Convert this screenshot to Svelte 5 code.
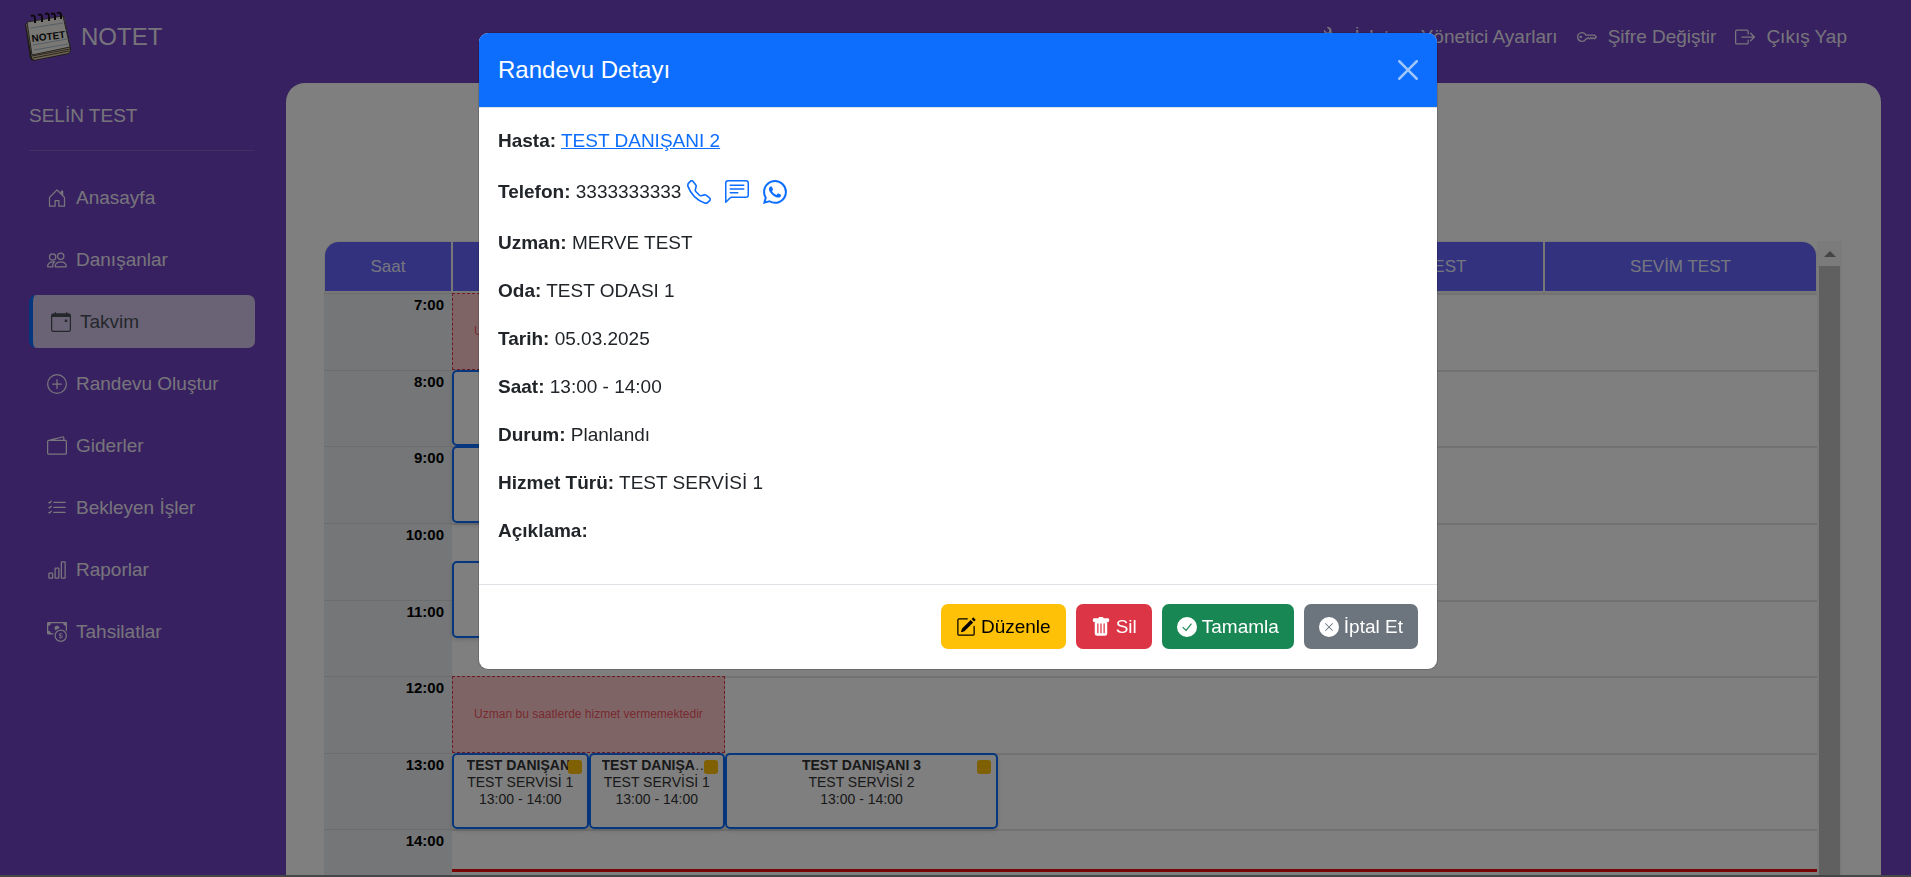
<script lang="ts">
	const icons: Record<string, string> = {
		house:
			'M8.354 1.146a.5.5 0 0 0-.708 0l-6 6A.5.5 0 0 0 1.5 7.5v7a.5.5 0 0 0 .5.5h4.5a.5.5 0 0 0 .5-.5v-4h2v4a.5.5 0 0 0 .5.5H14a.5.5 0 0 0 .5-.5v-7a.5.5 0 0 0-.146-.354L13 5.793V2.5a.5.5 0 0 0-.5-.5h-1a.5.5 0 0 0-.5.5v1.293zM2.5 14V7.707l5.5-5.5 5.5 5.5V14H10v-4a.5.5 0 0 0-.5-.5h-3a.5.5 0 0 0-.5.5v4z',
		people:
			'M15 14s1 0 1-1-1-4-5-4-5 3-5 4 1 1 1 1zm-7.978-1L7 12.996c.001-.264.167-1.03.76-1.72C8.312 10.629 9.282 10 11 10c1.717 0 2.687.63 3.24 1.276.593.69.758 1.457.76 1.72l-.008.002-.014.002zM11 7a2 2 0 1 0 0-4 2 2 0 0 0 0 4m3-2a3 3 0 1 1-6 0 3 3 0 0 1 6 0M6.936 9.28a6 6 0 0 0-1.23-.247A7 7 0 0 0 5 9c-4 0-5 3-5 4q0 1 1 1h4.216A2.24 2.24 0 0 1 5 13c0-1.01.377-2.042 1.09-2.904.243-.294.526-.569.846-.816M4.92 10A5.5 5.5 0 0 0 4 13H1c0-.26.164-1.03.76-1.724.545-.636 1.492-1.256 3.16-1.275ZM1.5 5.5a3 3 0 1 1 6 0 3 3 0 0 1-6 0m3-2a2 2 0 1 0 0 4 2 2 0 0 0 0-4',
		calendar:
			'M11 6.5a.5.5 0 0 1 .5-.5h1a.5.5 0 0 1 .5.5v1a.5.5 0 0 1-.5.5h-1a.5.5 0 0 1-.5-.5zM3.5 0a.5.5 0 0 1 .5.5V1h8V.5a.5.5 0 0 1 1 0V1h1a2 2 0 0 1 2 2v11a2 2 0 0 1-2 2H2a2 2 0 0 1-2-2V3a2 2 0 0 1 2-2h1V.5a.5.5 0 0 1 .5-.5M1 4v10a1 1 0 0 0 1 1h12a1 1 0 0 0 1-1V4z',
		plus: 'M8 15A7 7 0 1 1 8 1a7 7 0 0 1 0 14m0 1A8 8 0 1 0 8 0a8 8 0 0 0 0 16M8 4a.5.5 0 0 1 .5.5v3h3a.5.5 0 0 1 0 1h-3v3a.5.5 0 0 1-1 0v-3h-3a.5.5 0 0 1 0-1h3v-3A.5.5 0 0 1 8 4',
		wallet:
			'M12.136.326A1.5 1.5 0 0 1 14 1.78V3h.5A1.5 1.5 0 0 1 16 4.5v9a1.5 1.5 0 0 1-1.5 1.5h-13A1.5 1.5 0 0 1 0 13.5v-9a1.5 1.5 0 0 1 1.432-1.499zM5.562 3H13V1.78a.5.5 0 0 0-.621-.484zM1.5 4a.5.5 0 0 0-.5.5v9a.5.5 0 0 0 .5.5h13a.5.5 0 0 0 .5-.5v-9a.5.5 0 0 0-.5-.5z',
		list: 'M5 11.5a.5.5 0 0 1 .5-.5h9a.5.5 0 0 1 0 1h-9a.5.5 0 0 1-.5-.5m0-4a.5.5 0 0 1 .5-.5h9a.5.5 0 0 1 0 1h-9a.5.5 0 0 1-.5-.5m0-4a.5.5 0 0 1 .5-.5h9a.5.5 0 0 1 0 1h-9a.5.5 0 0 1-.5-.5M3.854 2.146a.5.5 0 0 1 0 .708l-1.5 1.5a.5.5 0 0 1-.708 0l-.5-.5a.5.5 0 1 1 .708-.708L2 3.293l1.146-1.147a.5.5 0 0 1 .708 0m0 4a.5.5 0 0 1 0 .708l-1.5 1.5a.5.5 0 0 1-.708 0l-.5-.5a.5.5 0 1 1 .708-.708L2 7.293l1.146-1.147a.5.5 0 0 1 .708 0m0 4a.5.5 0 0 1 0 .708l-1.5 1.5a.5.5 0 0 1-.708 0l-.5-.5a.5.5 0 0 1 .708-.708l.146.147 1.146-1.147a.5.5 0 0 1 .708 0',
		chart:
			'M4 11H2v3h2zm5-4H7v7h2zm5-5v12h-2V2zm-2-1a1 1 0 0 0-1 1v12a1 1 0 0 0 1 1h2a1 1 0 0 0 1-1V2a1 1 0 0 0-1-1zM6 7a1 1 0 0 1 1-1h2a1 1 0 0 1 1 1v7a1 1 0 0 1-1 1H7a1 1 0 0 1-1-1zm-5 4a1 1 0 0 1 1-1h2a1 1 0 0 1 1 1v3a1 1 0 0 1-1 1H2a1 1 0 0 1-1-1z',
		cash: 'M11 15a4 4 0 1 0 0-8 4 4 0 0 0 0 8m5-4a5 5 0 1 1-10 0 5 5 0 0 1 10 0M9.438 11.944c.047.596.518 1.06 1.363 1.116v.44h.375v-.443c.875-.061 1.386-.529 1.386-1.207 0-.618-.39-.936-1.09-1.1l-.296-.07v-1.2c.376.043.614.248.671.532h.658c-.047-.575-.54-1.024-1.329-1.073V8.5h-.375v.45c-.747.073-1.255.522-1.255 1.158 0 .562.378.92 1.007 1.066l.248.061v1.272c-.384-.058-.639-.27-.696-.563h-.668zm1.36-1.354c-.369-.085-.569-.26-.569-.522 0-.294.216-.514.572-.578v1.1zm.432.746c.449.104.655.272.655.569 0 .339-.257.571-.709.614v-1.195zM1 0a1 1 0 0 0-1 1v8a1 1 0 0 0 1 1h4.083q.088-.517.258-1H3a2 2 0 0 0-2-2V3a2 2 0 0 0 2-2h10a2 2 0 0 0 2 2v3.528c.38.34.717.728 1 1.154V1a1 1 0 0 0-1-1zM9.998 5.083 10 5a2 2 0 1 0-3.132 1.65 6 6 0 0 1 3.13-1.567',
		wrench:
			'M.102 2.223A3.004 3.004 0 0 0 3.78 5.897l6.341 6.252A3.003 3.003 0 0 0 13 16a3 3 0 1 0-.851-5.878L5.897 3.781A3.004 3.004 0 0 0 2.223.1l2.141 2.142L4 4l-1.757.364z',
		key: 'M0 8a4 4 0 0 1 7.465-2H14a.5.5 0 0 1 .354.146l1.5 1.5a.5.5 0 0 1 0 .708l-1.5 1.5a.5.5 0 0 1-.708 0L13 9.207l-.646.647a.5.5 0 0 1-.708 0L11 9.207l-.646.647a.5.5 0 0 1-.708 0L9 9.207l-.646.647A.5.5 0 0 1 8 10h-.535A4 4 0 0 1 0 8m4-3a3 3 0 1 0 2.712 4.285A.5.5 0 0 1 7.163 9h.63l.853-.854a.5.5 0 0 1 .708 0l.646.647.646-.647a.5.5 0 0 1 .708 0l.646.647.646-.647a.5.5 0 0 1 .708 0l.646.647.793-.793-1-1h-6.63a.5.5 0 0 1-.451-.285A3 3 0 0 0 4 5M4 8a1 1 0 1 1-2 0 1 1 0 0 1 2 0',
		exit: 'M10 12.5a.5.5 0 0 1-.5.5h-8a.5.5 0 0 1-.5-.5v-9a.5.5 0 0 1 .5-.5h8a.5.5 0 0 1 .5.5v2a.5.5 0 0 0 1 0v-2A1.5 1.5 0 0 0 9.5 2h-8A1.5 1.5 0 0 0 0 3.5v9A1.5 1.5 0 0 0 1.5 14h8a1.5 1.5 0 0 0 1.5-1.5v-2a.5.5 0 0 0-1 0zM15.854 8.354a.5.5 0 0 0 0-.708l-3-3a.5.5 0 0 0-.708.708L14.293 7.5H5.5a.5.5 0 0 0 0 1h8.793l-2.147 2.146a.5.5 0 0 0 .708.708z',
		phone:
			'M3.654 1.328a.678.678 0 0 0-1.015-.063L1.605 2.3c-.483.484-.661 1.169-.45 1.77a17.6 17.6 0 0 0 4.168 6.608 17.6 17.6 0 0 0 6.608 4.168c.601.211 1.286.033 1.77-.45l1.034-1.034a.678.678 0 0 0-.063-1.015l-2.307-1.794a.68.68 0 0 0-.58-.122l-2.19.547a1.75 1.75 0 0 1-1.657-.459L5.482 8.062a1.75 1.75 0 0 1-.46-1.657l.548-2.19a.68.68 0 0 0-.122-.58zM1.884.511a1.745 1.745 0 0 1 2.612.163L6.29 2.98c.329.423.445.974.315 1.494l-.547 2.19a.68.68 0 0 0 .178.643l2.457 2.457a.68.68 0 0 0 .644.178l2.189-.547a1.75 1.75 0 0 1 1.494.315l2.306 1.794c.829.645.905 1.87.163 2.611l-1.034 1.034c-.74.74-1.846 1.065-2.877.702a18.6 18.6 0 0 1-7.01-4.42 18.6 18.6 0 0 1-4.42-7.009c-.362-1.03-.037-2.137.703-2.877z',
		chat: 'M14 1a1 1 0 0 1 1 1v8a1 1 0 0 1-1 1H4.414A2 2 0 0 0 3 11.586l-2 2V2a1 1 0 0 1 1-1zM2 0a2 2 0 0 0-2 2v12.793a.5.5 0 0 0 .854.353l2.853-2.853A1 1 0 0 1 4.414 12H14a2 2 0 0 0 2-2V2a2 2 0 0 0-2-2zM3 3.5a.5.5 0 0 1 .5-.5h9a.5.5 0 0 1 0 1h-9a.5.5 0 0 1-.5-.5M3 6a.5.5 0 0 1 .5-.5h9a.5.5 0 0 1 0 1h-9A.5.5 0 0 1 3 6m0 2.5a.5.5 0 0 1 .5-.5h5a.5.5 0 0 1 0 1h-5a.5.5 0 0 1-.5-.5',
		whatsapp:
			'M13.601 2.326A7.85 7.85 0 0 0 7.994 0C3.627 0 .068 3.558.064 7.926c0 1.399.366 2.76 1.057 3.965L0 16l4.204-1.102a7.9 7.9 0 0 0 3.79.965h.004c4.368 0 7.926-3.558 7.93-7.93A7.9 7.9 0 0 0 13.6 2.326zM7.994 14.521a6.6 6.6 0 0 1-3.356-.92l-.24-.144-2.494.654.666-2.433-.156-.251a6.56 6.56 0 0 1-1.007-3.505c0-3.626 2.957-6.584 6.591-6.584a6.56 6.56 0 0 1 4.66 1.931 6.56 6.56 0 0 1 1.928 4.66c-.004 3.639-2.961 6.592-6.592 6.592m3.615-4.934c-.197-.099-1.17-.578-1.353-.646-.182-.065-.315-.099-.445.099-.133.197-.513.646-.627.775-.114.133-.232.148-.43.05-.197-.1-.836-.308-1.592-.985-.59-.525-.985-1.175-1.103-1.372-.114-.198-.011-.304.088-.403.087-.088.197-.232.296-.346.1-.114.133-.198.198-.33.065-.134.034-.248-.015-.347-.05-.099-.445-1.076-.612-1.47-.16-.389-.323-.335-.445-.34-.114-.007-.247-.007-.38-.007a.73.73 0 0 0-.529.247c-.182.198-.691.677-.691 1.654s.71 1.916.81 2.049c.098.133 1.394 2.132 3.383 2.992.47.205.84.326 1.129.418.475.152.904.129 1.246.08.38-.058 1.171-.48 1.338-.943.164-.464.164-.86.114-.943-.049-.084-.182-.133-.38-.232',
		pencil:
			'M15.502 1.94a.5.5 0 0 1 0 .706L14.459 3.69l-2-2L13.502.646a.5.5 0 0 1 .707 0l1.293 1.293zm-1.75 2.456-2-2L4.939 9.21a.5.5 0 0 0-.121.196l-.805 2.414a.25.25 0 0 0 .316.316l2.414-.805a.5.5 0 0 0 .196-.12l6.813-6.814zM1 13.5A1.5 1.5 0 0 0 2.5 15h11a1.5 1.5 0 0 0 1.5-1.5v-6a.5.5 0 0 0-1 0v6a.5.5 0 0 1-.5.5h-11a.5.5 0 0 1-.5-.5v-11a.5.5 0 0 1 .5-.5H9a.5.5 0 0 0 0-1H2.5A1.5 1.5 0 0 0 1 2.5z',
		trash:
			'M2.5 1a1 1 0 0 0-1 1v1a1 1 0 0 0 1 1H3v9a2 2 0 0 0 2 2h6a2 2 0 0 0 2-2V4h.5a1 1 0 0 0 1-1V2a1 1 0 0 0-1-1H10a1 1 0 0 0-1-1H7a1 1 0 0 0-1 1zm3 4a.5.5 0 0 1 .5.5v7a.5.5 0 0 1-1 0v-7a.5.5 0 0 1 .5-.5M8 5a.5.5 0 0 1 .5.5v7a.5.5 0 0 1-1 0v-7A.5.5 0 0 1 8 5m3 .5v7a.5.5 0 0 1-1 0v-7a.5.5 0 0 1 1 0',
		check:
			'M16 8A8 8 0 1 1 0 8a8 8 0 0 1 16 0M4.2 8.3 7.3 11.3 11.9 5.6 11.2 5 7.2 10 4.8 7.7z',
		cancel:
			'M16 8A8 8 0 1 1 0 8a8 8 0 0 1 16 0M5.3 4.8 4.8 5.3 7.5 8 4.8 10.7 5.3 11.2 8 8.5 10.7 11.2 11.2 10.7 8.5 8 11.2 5.3 10.7 4.8 8 7.5z',
		close:
			'M.293.293a1 1 0 0 1 1.414 0L8 6.586 14.293.293a1 1 0 1 1 1.414 1.414L9.414 8l6.293 6.293a1 1 0 0 1-1.414 1.414L8 9.414l-6.293 6.293a1 1 0 0 1-1.414-1.414L6.586 8 .293 1.707a1 1 0 0 1 0-1.414'
	};

	const menu = [
		{ icon: 'house', label: 'Anasayfa' },
		{ icon: 'people', label: 'Danışanlar' },
		{ icon: 'calendar', label: 'Takvim' },
		{ icon: 'plus', label: 'Randevu Oluştur' },
		{ icon: 'wallet', label: 'Giderler' },
		{ icon: 'list', label: 'Bekleyen İşler' },
		{ icon: 'chart', label: 'Raporlar' },
		{ icon: 'cash', label: 'Tahsilatlar' }
	];

	const topLinks = [
		{ icon: 'wrench', label: 'İşletme Yönetici Ayarları' },
		{ icon: 'key', label: 'Şifre Değiştir' },
		{ icon: 'exit', label: 'Çıkış Yap' }
	];

	const experts = ['MERVE TEST', 'SELİN TEST', 'UZMAN TEST', 'SERKAN TEST', 'SEVİM TEST'];

	const firstHour = 7;
	const hours = Array.from({ length: 16 }, (_, idx) => firstHour + idx);
	const now = 14.52;

	// col counts half columns, each expert owns two of them
	const blocked = [
		{ start: 7, col: 1 },
		{ start: 12, col: 1 }
	];
	const events = [
		{ start: 8, col: 1, span: 2, name: 'TEST DANIŞANI 1', service: 'TEST SERVİSİ 1' },
		{ start: 9, col: 1, span: 2, name: 'TEST DANIŞANI 1', service: 'TEST SERVİSİ 1' },
		{ start: 10.5, col: 1, span: 2, name: 'TEST DANIŞANI 2', service: 'TEST SERVİSİ 1' },
		{ start: 13, col: 1, span: 1, name: 'TEST DANIŞANI', service: 'TEST SERVİSİ 1' },
		{ start: 13, col: 2, span: 1, name: 'TEST DANIŞANI 2', service: 'TEST SERVİSİ 1' },
		{ start: 13, col: 3, span: 2, name: 'TEST DANIŞANI 3', service: 'TEST SERVİSİ 2' }
	];

	const details = [
		['Uzman', 'MERVE TEST'],
		['Oda', 'TEST ODASI 1'],
		['Tarih', '05.03.2025'],
		['Saat', '13:00 - 14:00'],
		['Durum', 'Planlandı'],
		['Hizmet Türü', 'TEST SERVİSİ 1'],
		['Açıklama', '']
	];

	let active = $state('Takvim');
	let open = $state(true);

	function row(start: number) {
		return (start - firstHour) * 2 + 1;
	}

	function time(value: number) {
		return `${Math.floor(value)}:${value % 1 ? '30' : '00'}`;
	}
</script>

{#snippet icon(name: string)}
	<svg class="icon" viewBox="0 0 16 16" fill="currentColor" aria-hidden="true">
		<path d={icons[name]} />
	</svg>
{/snippet}

<div class="app">
	<header class="topbar">
		<a class="brand" href="#anasayfa">
			<svg class="logo" viewBox="0 0 48 50" aria-hidden="true">
				<path d="M1 12 L40 4 L47 38 L45 42 L9 49 L6 47 Z" fill="#3a3530" />
				<path d="M2 12 L8 46 L10 48 L45 41 L46 38 L40 5 Z" fill="#d8c9a8" />
				<path d="M8 44 L46 37 M9 46 L45 39" stroke="#5c4d3c" stroke-width="1" />
				<path d="M3 10 L39 4 L46 35 L8 43 Z" fill="#f2f0ea" stroke="#4b4640" stroke-width="1" />
				<path d="M7 16 L39 11 M9 33 L43 27 M10 38 L44 32" stroke="#a9bccb" stroke-width="1" />
				<g fill="none" stroke="#16131a" stroke-width="2">
					<path d="M7 4q4-2 4 3v4" />
					<path d="M14 3q4-2 4 3v4" />
					<path d="M21 2q4-2 4 3v4" />
					<path d="M27 2q4-2 4 3v3" />
					<path d="M33 1q4-2 4 3v3" />
				</g>
				<text x="8" y="30" font-size="10" font-weight="700" fill="#111" transform="rotate(-7 8 30)">NOTET</text>
			</svg>
			<span>NOTET</span>
		</a>
		<nav class="links">
			{#each topLinks as link}
				<a href="#{link.icon}">{@render icon(link.icon)}{link.label}</a>
			{/each}
		</nav>
	</header>

	<div class="content">
		<aside class="sidebar">
			<div class="user">SELİN TEST</div>
			<nav class="menu">
				{#each menu as item}
					<a
						href="#{item.icon}"
						class:active={active === item.label}
						onclick={() => (active = item.label)}
					>
						{@render icon(item.icon)}{item.label}
					</a>
				{/each}
			</nav>
		</aside>

		<main class="panel">
			<div class="scroller">
				<div class="calendar">
					<div class="head">
						<div>Saat</div>
						{#each experts as expert}
							<div>{expert}</div>
						{/each}
					</div>
					<div class="body">
						<div class="times">
							{#each hours as hour}
								<div>{hour}:00</div>
							{/each}
						</div>
						<div class="slots">
							{#each hours as hour}
								<div class="line" style="grid-row: {row(hour)} / span 2"></div>
							{/each}
							{#each blocked as item}
								<div class="blocked" style="grid-area: {row(item.start)} / {item.col} / span 2 / span 2">
									Uzman bu saatlerde hizmet vermemektedir
								</div>
							{/each}
							{#each events as item}
								<button
									class="event"
									style="grid-area: {row(item.start)} / {item.col} / span 2 / span {item.span}"
									onclick={() => (open = true)}
								>
									<span class="name"><strong>{item.name}</strong></span>
									<span>{item.service}</span>
									<span>{time(item.start)} - {time(item.start + 1)}</span>
									<i class="badge"></i>
								</button>
							{/each}
							<div class="now" style="top: {((now - firstHour) / hours.length) * 100}%"></div>
						</div>
					</div>
				</div>
				<div class="scrollbar">
					<i class="up"></i>
					<i class="thumb"></i>
				</div>
			</div>
		</main>
	</div>
</div>

{#if open}
	<div class="backdrop">
		<div class="modal" role="dialog" aria-modal="true" aria-labelledby="modal-title">
			<div class="modal-header">
				<h5 id="modal-title">Randevu Detayı</h5>
				<button class="close" aria-label="Kapat" onclick={() => (open = false)}>
					{@render icon('close')}
				</button>
			</div>
			<div class="modal-body">
				<p><strong>Hasta:</strong> <a href="#hasta">TEST DANIŞANI 2</a></p>
				<div class="phone">
					<span><strong>Telefon:</strong> 3333333333</span>
					<a href="#tel" aria-label="Ara">{@render icon('phone')}</a>
					<a href="#sms" aria-label="SMS">{@render icon('chat')}</a>
					<a href="#whatsapp" aria-label="WhatsApp">{@render icon('whatsapp')}</a>
				</div>
				{#each details as [label, value]}
					<p><strong>{label}:</strong> {value}</p>
				{/each}
			</div>
			<div class="modal-footer">
				<button class="btn warning">{@render icon('pencil')}Düzenle</button>
				<button class="btn danger">{@render icon('trash')}Sil</button>
				<button class="btn success">{@render icon('check')}Tamamla</button>
				<button class="btn secondary">{@render icon('cancel')}İptal Et</button>
			</div>
		</div>
	</div>
{/if}
<div class="edge"></div>

<style>
	:global(body) {
		background: #6f42c1;
		overflow: hidden;
	}

	.app,
	.backdrop {
		font-family: 'Liberation Sans', Arial, sans-serif;
		font-size: 19px;
		line-height: 29px;
		color: #212529;
	}

	.app,
	.app *,
	.backdrop,
	.backdrop * {
		box-sizing: border-box;
	}

	button {
		font: inherit;
		cursor: pointer;
	}

	.icon {
		display: block;
		flex: none;
		width: 20px;
		height: 20px;
	}

	.app {
		display: flex;
		flex-direction: column;
		height: 100vh;
		background: #6f42c1;
	}

	.topbar {
		display: flex;
		flex: none;
		align-items: center;
		justify-content: space-between;
		height: 83px;
		padding: 0 64px 10px 24px;
	}

	.topbar a {
		display: flex;
		align-items: center;
		color: rgba(255, 255, 255, 0.9);
		text-decoration: none;
	}

	.brand {
		gap: 9px;
		font-size: 24px;
	}

	.logo {
		width: 48px;
		height: 50px;
	}

	.links {
		display: flex;
		gap: 19px;
	}

	.links a {
		gap: 11px;
		white-space: nowrap;
	}

	.content {
		display: flex;
		flex: 1;
		min-height: 0;
		padding-right: 30px;
	}

	.sidebar {
		flex: none;
		width: 286px;
		padding: 18px 31px 0 29px;
		color: rgba(255, 255, 255, 0.9);
	}

	.user {
		padding-bottom: 20px;
		border-bottom: 1px solid rgba(255, 255, 255, 0.15);
	}

	.menu {
		display: flex;
		flex-direction: column;
		gap: 9px;
		padding-top: 20px;
	}

	.menu a {
		display: flex;
		align-items: center;
		gap: 9px;
		padding: 12px 18px;
		border-radius: 7px;
		color: rgba(255, 255, 255, 0.9);
		text-decoration: none;
	}

	.menu a.active {
		border-left: 4px solid #0d6efd;
		background: rgba(255, 255, 255, 0.7);
		color: #495057;
	}

	.panel {
		display: flex;
		flex: 1;
		min-width: 0;
		padding: 158px 39px 0 38px;
		border-radius: 19px 19px 0 0;
		background: #fff;
	}

	.scroller {
		display: flex;
		flex: 1;
		min-width: 0;
		overflow: hidden;
	}

	.calendar {
		flex: 1;
		min-width: 0;
	}

	.head {
		display: grid;
		grid-template-columns: 126px repeat(5, 1fr);
		gap: 2px;
		padding: 1px 1px 2px;
		overflow: hidden;
		border-radius: 15px 15px 0 0;
		background: #f0f0f0;
		color: rgba(255, 255, 255, 0.9);
		font-size: 17px;
		text-align: center;
	}

	.head div {
		padding: 10px;
		background: #6665ff;
	}

	.head div:first-child {
		border-top-left-radius: 14px;
	}

	.head div:last-child {
		border-top-right-radius: 14px;
	}

	.body {
		display: grid;
		grid-template-columns: 128px 1fr;
		height: 1226px;
	}

	.times {
		display: grid;
		grid-auto-rows: 1fr;
		background: #e9ecef;
		color: #000;
		font-size: 15px;
		font-weight: 700;
		line-height: 20px;
		text-align: right;
	}

	.times div {
		padding: 1px 8px;
		border-top: 1px solid #d6d8da;
	}

	.slots {
		position: relative;
		display: grid;
		grid-template: repeat(32, 1fr) / repeat(10, 1fr);
	}

	.line {
		grid-column: 1 / -1;
		border-top: 2px solid #e4e4e4;
	}

	.blocked {
		display: flex;
		align-items: center;
		justify-content: center;
		border: 1px dashed #dc3545;
		background: #ffc9cd;
		color: #f0555f;
		font-size: 12px;
	}

	.event {
		position: relative;
		display: flex;
		flex-direction: column;
		align-items: center;
		min-width: 0;
		padding: 2px 11px;
		border: 2px solid #0d6efd;
		border-radius: 5px;
		background: #fff;
		box-shadow: 0 2px 4px rgba(0, 0, 0, 0.15);
		color: #333;
		font-size: 14px;
		line-height: 17px;
	}

	.event span {
		white-space: nowrap;
	}

	.event .name {
		max-width: 100%;
		overflow: hidden;
		text-overflow: ellipsis;
	}

	.badge {
		position: absolute;
		top: 5px;
		right: 5px;
		width: 14px;
		height: 14px;
		border-radius: 3px;
		background: #ffc107;
	}

	.now {
		position: absolute;
		left: 0;
		right: 0;
		height: 3px;
		background: #f00a0a;
	}

	.scrollbar {
		flex: none;
		width: 25px;
		padding: 10px 2px 0;
		background: #f6f6f6;
	}

	.scrollbar i {
		display: block;
	}

	.up {
		width: 0;
		margin: 0 auto;
		border: 6px solid transparent;
		border-top: 0;
		border-bottom-color: #8a8a8a;
	}

	.thumb {
		height: 100%;
		margin-top: 9px;
		background: #c1c1c1;
	}

	.backdrop {
		position: fixed;
		inset: 0;
		z-index: 10;
		padding: 33px 0 0 5px;
		background: rgba(0, 0, 0, 0.5);
	}

	.modal {
		max-width: 958px;
		margin: 0 auto;
		overflow: hidden;
		border-radius: 9px;
		background: #fff;
		box-shadow: 0 0 0 1px rgba(0, 0, 0, 0.15);
	}

	.modal-header {
		display: flex;
		align-items: center;
		justify-content: space-between;
		padding: 19px;
		border-bottom: 1px solid #dee2e6;
		background: #0d6efd;
		color: #fff;
	}

	h5 {
		margin: 0;
		font-size: 24px;
		font-weight: 400;
		line-height: 36px;
	}

	.close {
		padding: 0;
		border: 0;
		background: none;
		color: rgba(255, 255, 255, 0.6);
	}

	.modal-body {
		padding: 18px 19px 20px;
	}

	.modal-body p {
		margin: 0 0 19px;
	}

	.modal-body a {
		color: #0d6efd;
	}

	.phone {
		display: flex;
		align-items: center;
		gap: 14px;
		height: 35px;
		margin-bottom: 19px;
	}

	.phone span {
		margin-right: -8px;
	}

	.phone .icon {
		width: 24px;
		height: 24px;
	}

	.modal-footer {
		display: flex;
		justify-content: flex-end;
		gap: 10px;
		padding: 19px 19px 20px;
		border-top: 1px solid #dee2e6;
	}

	.btn {
		display: flex;
		align-items: center;
		gap: 5px;
		padding: 8px 15px;
		border: 0;
		border-radius: 7px;
		color: #fff;
	}

	.warning {
		background: #ffc107;
		color: #000;
	}

	.danger {
		background: #dc3545;
	}

	.success {
		background: #198754;
	}

	.secondary {
		background: #6c757d;
	}

	.edge {
		position: fixed;
		right: 0;
		bottom: 0;
		left: 0;
		z-index: 11;
		height: 2px;
		background: #464648;
	}
</style>
